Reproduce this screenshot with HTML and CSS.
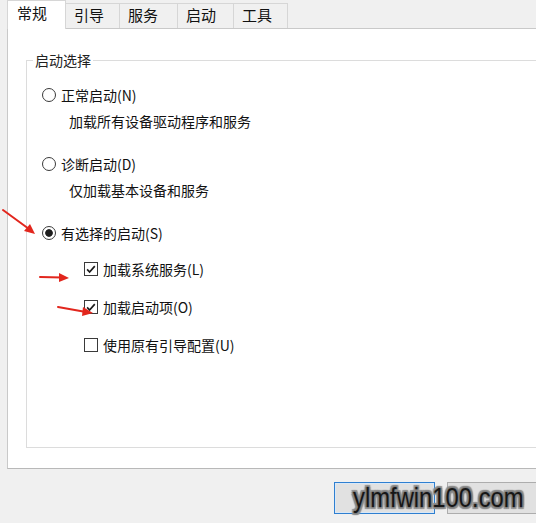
FILE: index.html
```html
<!DOCTYPE html>
<html lang="zh-CN">
<head>
<meta charset="utf-8">
<title>系统配置</title>
<link rel="stylesheet" href="styles.css">
</head>
<body>
<div class="dialog">
  <div class="tabs">
    <div class="tab tab-active">常规</div>
    <div class="tab tab-boot">引导</div>
    <div class="tab tab-services">服务</div>
    <div class="tab tab-startup">启动</div>
    <div class="tab tab-tools">工具</div>
  </div>
  <div class="panel">
    <fieldset class="group">
      <legend class="group-title">启动选择</legend>
      <div class="options">
        <div class="option">
          <div class="row"><span class="radio"></span><span>正常启动(N)</span></div>
          <div class="desc">加载所有设备驱动程序和服务</div>
        </div>
        <div class="option">
          <div class="row"><span class="radio"></span><span>诊断启动(D)</span></div>
          <div class="desc">仅加载基本设备和服务</div>
        </div>
        <div class="option">
          <div class="row"><span class="radio radio-on"></span><span>有选择的启动(S)</span></div>
          <div class="sub-options">
            <div class="row"><span class="check"><svg viewBox="0 0 13 13" width="13" height="13"><polyline points="2.3,6.4 5,9.3 10.6,2.8" /></svg></span><span>加载系统服务(L)</span></div>
            <div class="row"><span class="check"><svg viewBox="0 0 13 13" width="13" height="13"><polyline points="2.3,6.4 5,9.3 10.6,2.8" /></svg></span><span>加载启动项(O)</span></div>
            <div class="row"><span class="check"></span><span>使用原有引导配置(U)</span></div>
          </div>
        </div>
      </div>
    </fieldset>
  </div>
  <div class="buttons">
    <div class="btn btn-default"></div>
    <div class="btn btn-cut"></div>
  </div>
</div>

<svg class="arrows" width="536" height="523" viewBox="0 0 536 523">
  <g stroke="#e2261d" stroke-width="2" stroke-linecap="round" fill="none">
    <line x1="3" y1="210" x2="29" y2="229"/>
    <line x1="40" y1="277" x2="62" y2="277.5"/>
    <line x1="58" y1="307" x2="86" y2="312"/>
  </g>
  <g fill="#e2261d">
    <polygon points="35,234 24,231 30,224"/>
    <polygon points="69,278 59,273 59,282"/>
    <polygon points="93,313 83,307 82,316"/>
  </g>
</svg>

<div class="watermark">ylmfwin100.com</div>
</body>
</html>
```

FILE: styles.css
```css
html, body {
  margin: 0;
  padding: 0;
}

body {
  width: 536px;
  height: 523px;
  overflow: hidden;
  position: relative;
  background: #f0f0f0;
  font-family: "Microsoft YaHei", "Noto Sans CJK SC", "Noto Sans", sans-serif;
  font-size: 14px;
  color: #111;
}

.dialog {
  width: 536px;
}

.tabs {
  display: flex;
  align-items: flex-end;
  height: 28px;
  padding-left: 7px;
}

.tab {
  box-sizing: border-box;
  height: 25px;
  width: 55px;
  padding-left: 8px;
  border: 1px solid #d6d6d6;
  border-left: none;
  border-bottom: none;
  background: #f0f0f0;
  font-size: 15px;
  line-height: 22px;
}

.tab-boot { width: 54px; }
.tab-services { width: 58px; }
.tab-startup { width: 56px; }
.tab-tools { width: 54px; }

.tab-active {
  width: 59px;
  height: 29px;
  margin-bottom: -1px;
  padding-left: 9px;
  border-left: 1px solid #d6d6d6;
  background: #fff;
  line-height: 24px;
  position: relative;
  z-index: 1;
}

.panel {
  box-sizing: border-box;
  margin-left: 7px;
  width: 529px;
  height: 441px;
  background: #fff;
  border: 1px solid #c9c9c9;
  border-right: none;
  border-bottom-color: #b8b8b8;
  padding-top: 22px;
}

.group {
  box-sizing: border-box;
  margin: 0 0 0 18px;
  width: 510px;
  height: 397px;
  padding: 0 0 0 6px;
  border: 1px solid #dcdcdc;
  border-right: none;
  min-width: 0;
}

.group-title {
  padding: 0 2px;
  font-size: 14px;
  line-height: 18px;
  color: #222;
}

.options {
  margin-left: 9px;
  padding-top: 16px;
  display: flex;
  flex-direction: column;
  gap: 23px;
}

.row {
  display: flex;
  align-items: center;
  gap: 5px;
  height: 20px;
  line-height: 20px;
  white-space: nowrap;
}

.desc {
  margin-top: 6px;
  padding-left: 27px;
  height: 20px;
  line-height: 20px;
}

.radio {
  box-sizing: border-box;
  width: 14px;
  height: 14px;
  border: 1px solid #3a3a3a;
  border-radius: 50%;
  background: #fff;
  flex: none;
}

.radio-on {
  background: radial-gradient(circle, #1c1c1c 0 3.4px, #fff 4.2px);
}

.sub-options {
  margin-top: 16px;
  padding-left: 42px;
  display: flex;
  flex-direction: column;
  gap: 18px;
}

.check {
  box-sizing: border-box;
  width: 14px;
  height: 14px;
  border: 1px solid #3a3a3a;
  background: #fff;
  flex: none;
  display: flex;
  align-items: center;
  justify-content: center;
}

.check svg {
  display: block;
}

.check polyline {
  fill: none;
  stroke: #1a1a1a;
  stroke-width: 1.8;
}

.buttons {
  display: flex;
  gap: 12px;
  padding-left: 334px;
  margin-top: 13px;
}

.btn {
  box-sizing: border-box;
  flex: none;
  width: 101px;
  height: 32px;
  background: #e1e1e1;
  border: 1px solid #adadad;
}

.btn-cut {
  width: 89px;
  border-right: none;
}

.btn-default {
  border: 1px solid #2f7fd0;
  box-shadow: inset 0 0 0 1px #d9e8f7;
}

.arrows {
  position: absolute;
  left: 0;
  top: 0;
}

.watermark {
  position: absolute;
  left: 353px;
  top: 484px;
  font-family: "Liberation Sans", Arial, sans-serif;
  font-size: 28px;
  line-height: 28px;
  color: #161616;
  transform: scaleX(0.85);
  transform-origin: left top;
  white-space: nowrap;
  text-shadow:
    1px 0 0 #7a7a7a, -1px 0 0 #7a7a7a, 0 1px 0 #7a7a7a, 0 -1px 0 #7a7a7a,
    2px 0 1px #8a8a8a, -2px 0 1px #8a8a8a, 0 2px 1px #8a8a8a, 0 -2px 1px #8a8a8a,
    2px 2px 1px #909090, -2px -2px 1px #909090, 2px -2px 1px #909090, -2px 2px 1px #909090,
    0 0 3px #999;
}
```
